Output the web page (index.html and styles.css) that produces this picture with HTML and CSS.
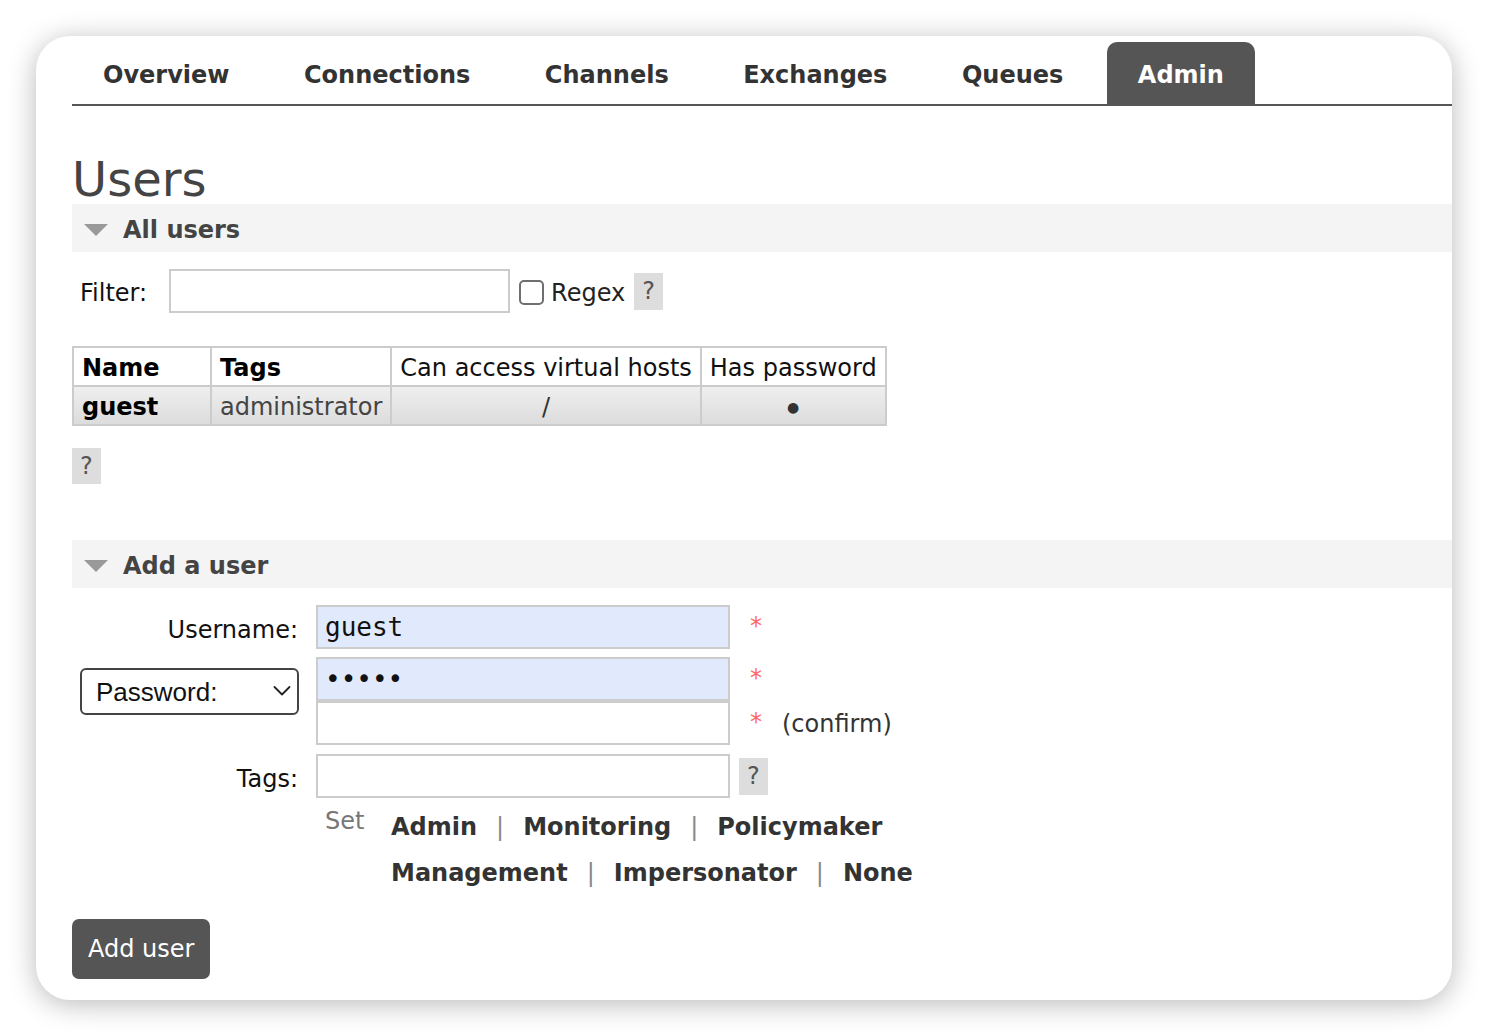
FILE: index.html
```html
<!DOCTYPE html>
<html lang="en">
<head>
<meta charset="utf-8">
<title>Users - RabbitMQ Management</title>
<link rel="stylesheet" href="styles.css">
</head>
<body>
<div class="card">
  <ul class="tabs">
    <li><a class="tab">Overview</a></li>
    <li><a class="tab">Connections</a></li>
    <li><a class="tab">Channels</a></li>
    <li><a class="tab">Exchanges</a></li>
    <li><a class="tab">Queues</a></li>
    <li><a class="tab tab-active">Admin</a></li>
  </ul>

  <h1 class="title">Users</h1>

  <div class="section">
    <h2 class="sec-head"><svg class="tri" width="24" height="12" viewBox="0 0 24 12"><polygon points="0,0 24,0 12,12" fill="#999"/></svg>All users</h2>
    <div class="filter-row">
      <span class="filter-label">Filter:</span>
      <input class="text filter-input" type="text">
      <input class="cb" type="checkbox">
      <span class="regex">Regex</span>
      <span class="help">?</span>
    </div>

    <table class="users">
      <thead>
        <tr>
          <th class="c-name">Name</th>
          <th class="c-tags">Tags</th>
          <th class="plain">Can access virtual hosts</th>
          <th class="plain">Has password</th>
        </tr>
      </thead>
      <tbody>
        <tr>
          <td class="strong">guest</td>
          <td class="muted">administrator</td>
          <td class="center">/</td>
          <td class="center"><span class="dot">●</span></td>
        </tr>
      </tbody>
    </table>
    <div class="help-row"><span class="help">?</span></div>
  </div>

  <div class="section section-add">
    <h2 class="sec-head"><svg class="tri" width="24" height="12" viewBox="0 0 24 12"><polygon points="0,0 24,0 12,12" fill="#999"/></svg>Add a user</h2>

    <form class="form">
      <div class="row row-user">
        <label class="lbl">Username:</label>
        <div class="field">
          <input class="text mono filled" type="text" value="guest">
          <span class="req">*</span>
        </div>
      </div>

      <div class="row row-pass">
        <div class="lbl lbl-select">
          <span class="select-wrap">
            <select class="select"><option>Password:</option><option>Hashed password:</option><option>No password</option></select>
            <svg class="chev" width="18" height="12" viewBox="0 0 18 12"><polyline points="1.5,2 9,9.5 16.5,2" fill="none" stroke="#222" stroke-width="1.8" stroke-linecap="round" stroke-linejoin="round"/></svg>
          </span>
        </div>
        <div class="field-stack">
          <div class="field">
            <input class="text mono filled" type="password" value="guest">
            <span class="req">*</span>
          </div>
          <div class="field">
            <input class="text mono" type="password">
            <span class="req">*</span>
            <span class="confirm">(confirm)</span>
          </div>
        </div>
      </div>

      <div class="row row-tags">
        <label class="lbl">Tags:</label>
        <div class="field">
          <input class="text" type="text">
          <span class="help help-tags">?</span>
        </div>
      </div>

      <div class="row row-set">
        <div class="lbl"></div>
        <div class="set-block">
          <span class="set">Set</span>
          <div class="tag-lines">
            <div class="tag-line"><a class="tag-link">Admin</a><span class="sep">|</span><a class="tag-link">Monitoring</a><span class="sep">|</span><a class="tag-link">Policymaker</a></div>
            <div class="tag-line"><a class="tag-link">Management</a><span class="sep">|</span><a class="tag-link">Impersonator</a><span class="sep">|</span><a class="tag-link">None</a></div>
          </div>
        </div>
      </div>

      <button class="btn" type="button">Add user</button>
    </form>
  </div>
</div>
</body>
</html>
```

FILE: styles.css
```css
html, body {
  margin: 0;
  padding: 0;
  background: #ffffff;
}

body {
  padding: 36px;
  font-family: "DejaVu Sans", Verdana, sans-serif;
  font-size: 24px;
  color: #111;
}

.card {
  box-sizing: border-box;
  width: 1416px;
  height: 964px;
  background: #fff;
  border-radius: 34px;
  box-shadow: 0 4px 28px rgba(0, 0, 0, 0.28);
  padding: 6px 0 0 36px;
  overflow: hidden;
}

/* Tabs */
.tabs {
  list-style: none;
  margin: 0;
  padding: 0;
  display: flex;
  border-bottom: 2px solid #555;
}

.tab {
  display: block;
  height: 58px;
  line-height: 58px;
  padding: 4px 31.5px 0 31px;
  margin-right: 12px;
  font-weight: bold;
  color: #333;
  text-decoration: none;
  border-radius: 10px 10px 0 0;
}

.tab-active {
  background: #555;
  color: #fff;
}

/* Title */
.title {
  margin: 49px 0 0 0;
  font-size: 48px;
  line-height: 49px;
  font-weight: normal;
  color: #444;
}

/* Section headers */
.sec-head {
  box-sizing: border-box;
  margin: 0;
  height: 48px;
  padding-top: 3px;
  display: flex;
  align-items: center;
  background: #f4f4f4;
  font-size: 24px;
  font-weight: bold;
  color: #444;
}

.tri {
  margin: 0 15px 0 12px;
  flex: none;
}

/* Filter row */
.filter-row {
  margin-top: 17px;
  display: flex;
  align-items: center;
  height: 44px;
}

.filter-label {
  margin-left: 8px;
  padding-top: 4px;
  color: #111;
}

.text {
  box-sizing: border-box;
  height: 44px;
  border: 2px solid #ccc;
  background: #fff;
  font-family: "DejaVu Sans", Verdana, sans-serif;
  font-size: 24px;
  padding: 0 7px;
  margin: 0;
  outline: none;
}

.filter-input {
  width: 341px;
  margin-left: 22px;
}

.cb {
  appearance: none;
  -webkit-appearance: none;
  box-sizing: border-box;
  width: 25px;
  height: 25px;
  border: 2px solid #6f6f6f;
  border-radius: 5px;
  background: #fff;
  margin: 2px 7px 0 9px;
}

.regex {
  padding-top: 3px;
  color: #222;
}

.help {
  display: inline-block;
  background: #ddd;
  color: #555;
  padding: 0 8px;
  height: 37px;
  line-height: 37px;
  margin-left: 9px;
}

.help-row {
  margin-top: 22px;
}

.help-row .help {
  margin-left: 0;
  height: 36px;
  line-height: 36px;
}

/* Table */
.users {
  margin-top: 33px;
  border-collapse: collapse;
  font-size: 24px;
}

.users th,
.users td {
  border: 2px solid #ccc;
  padding: 0 8px;
  text-align: left;
  white-space: nowrap;
}

.users th {
  height: 34px;
  line-height: 34px;
  padding-top: 3px;
  color: #000;
  background: #fff;
}

.users th.plain {
  font-weight: normal;
  color: #111;
}

.users th.c-name {
  width: 120px;
}

.users td {
  height: 34px;
  line-height: 34px;
  padding-top: 2px;
  background: linear-gradient(#efefef, #dcdcdc);
}

.users td.strong {
  font-weight: bold;
  color: #000;
}

.users td.muted {
  color: #444;
}

.users td.center {
  text-align: center;
  color: #333;
}

.dot {
  font-size: 14px;
  color: #333;
  vertical-align: 2px;
}

/* Add user section */
.section-add {
  margin-top: 56px;
}

.form {
  margin: 0;
}

.row {
  display: flex;
  align-items: center;
}

.row-user {
  margin-top: 17px;
}

.row-pass {
  margin-top: 8px;
  align-items: flex-start;
}

.row-tags {
  margin-top: 9px;
}

.lbl {
  width: 226px;
  flex: none;
  text-align: right;
  margin-right: 18px;
  padding-top: 6px;
  color: #111;
}

.lbl-select {
  padding-top: 11px;
  text-align: left;
}

.select-wrap {
  position: relative;
  display: inline-block;
  margin-left: 8px;
}

.select {
  appearance: none;
  -webkit-appearance: none;
  box-sizing: border-box;
  width: 219px;
  height: 47px;
  border: 2px solid #444;
  border-radius: 6px;
  background: #fff;
  font-family: "Liberation Sans", Arial, sans-serif;
  font-size: 26px;
  color: #111;
  padding: 0 14px;
  margin: 0;
  display: block;
}

.chev {
  position: absolute;
  right: 8px;
  top: 17px;
  pointer-events: none;
}

.field {
  display: flex;
  align-items: center;
}

.field .text {
  width: 414px;
}

.mono {
  font-family: "DejaVu Sans Mono", Menlo, monospace;
  font-size: 26px;
  color: #111;
}

.filled {
  background: #e1eafc;
}

.req {
  color: #f66;
  margin-left: 20px;
  width: 12px;
  padding-bottom: 2px;
}

.confirm {
  margin-left: 20px;
  padding-top: 2px;
  color: #333;
}

.help-tags {
  margin-left: 9px;
}

.row-set {
  margin-top: 6px;
  align-items: flex-start;
}

.row-set .lbl {
  padding-top: 0;
}

.set-block {
  display: flex;
  align-items: flex-start;
}

.set {
  width: 66px;
  padding-left: 9px;
  color: #777;
  line-height: 34px;
}

.tag-line {
  display: flex;
  align-items: center;
  height: 46px;
}

.tag-link {
  font-weight: bold;
  color: #333;
  text-decoration: none;
}

.sep {
  color: #888;
  margin: 0 19px;
}

.btn {
  margin-top: 23px;
  height: 60px;
  padding: 0 16px;
  border: none;
  border-radius: 7px;
  background: #555;
  color: #fff;
  font-family: "DejaVu Sans", Verdana, sans-serif;
  font-size: 24px;
  cursor: pointer;
}
```
